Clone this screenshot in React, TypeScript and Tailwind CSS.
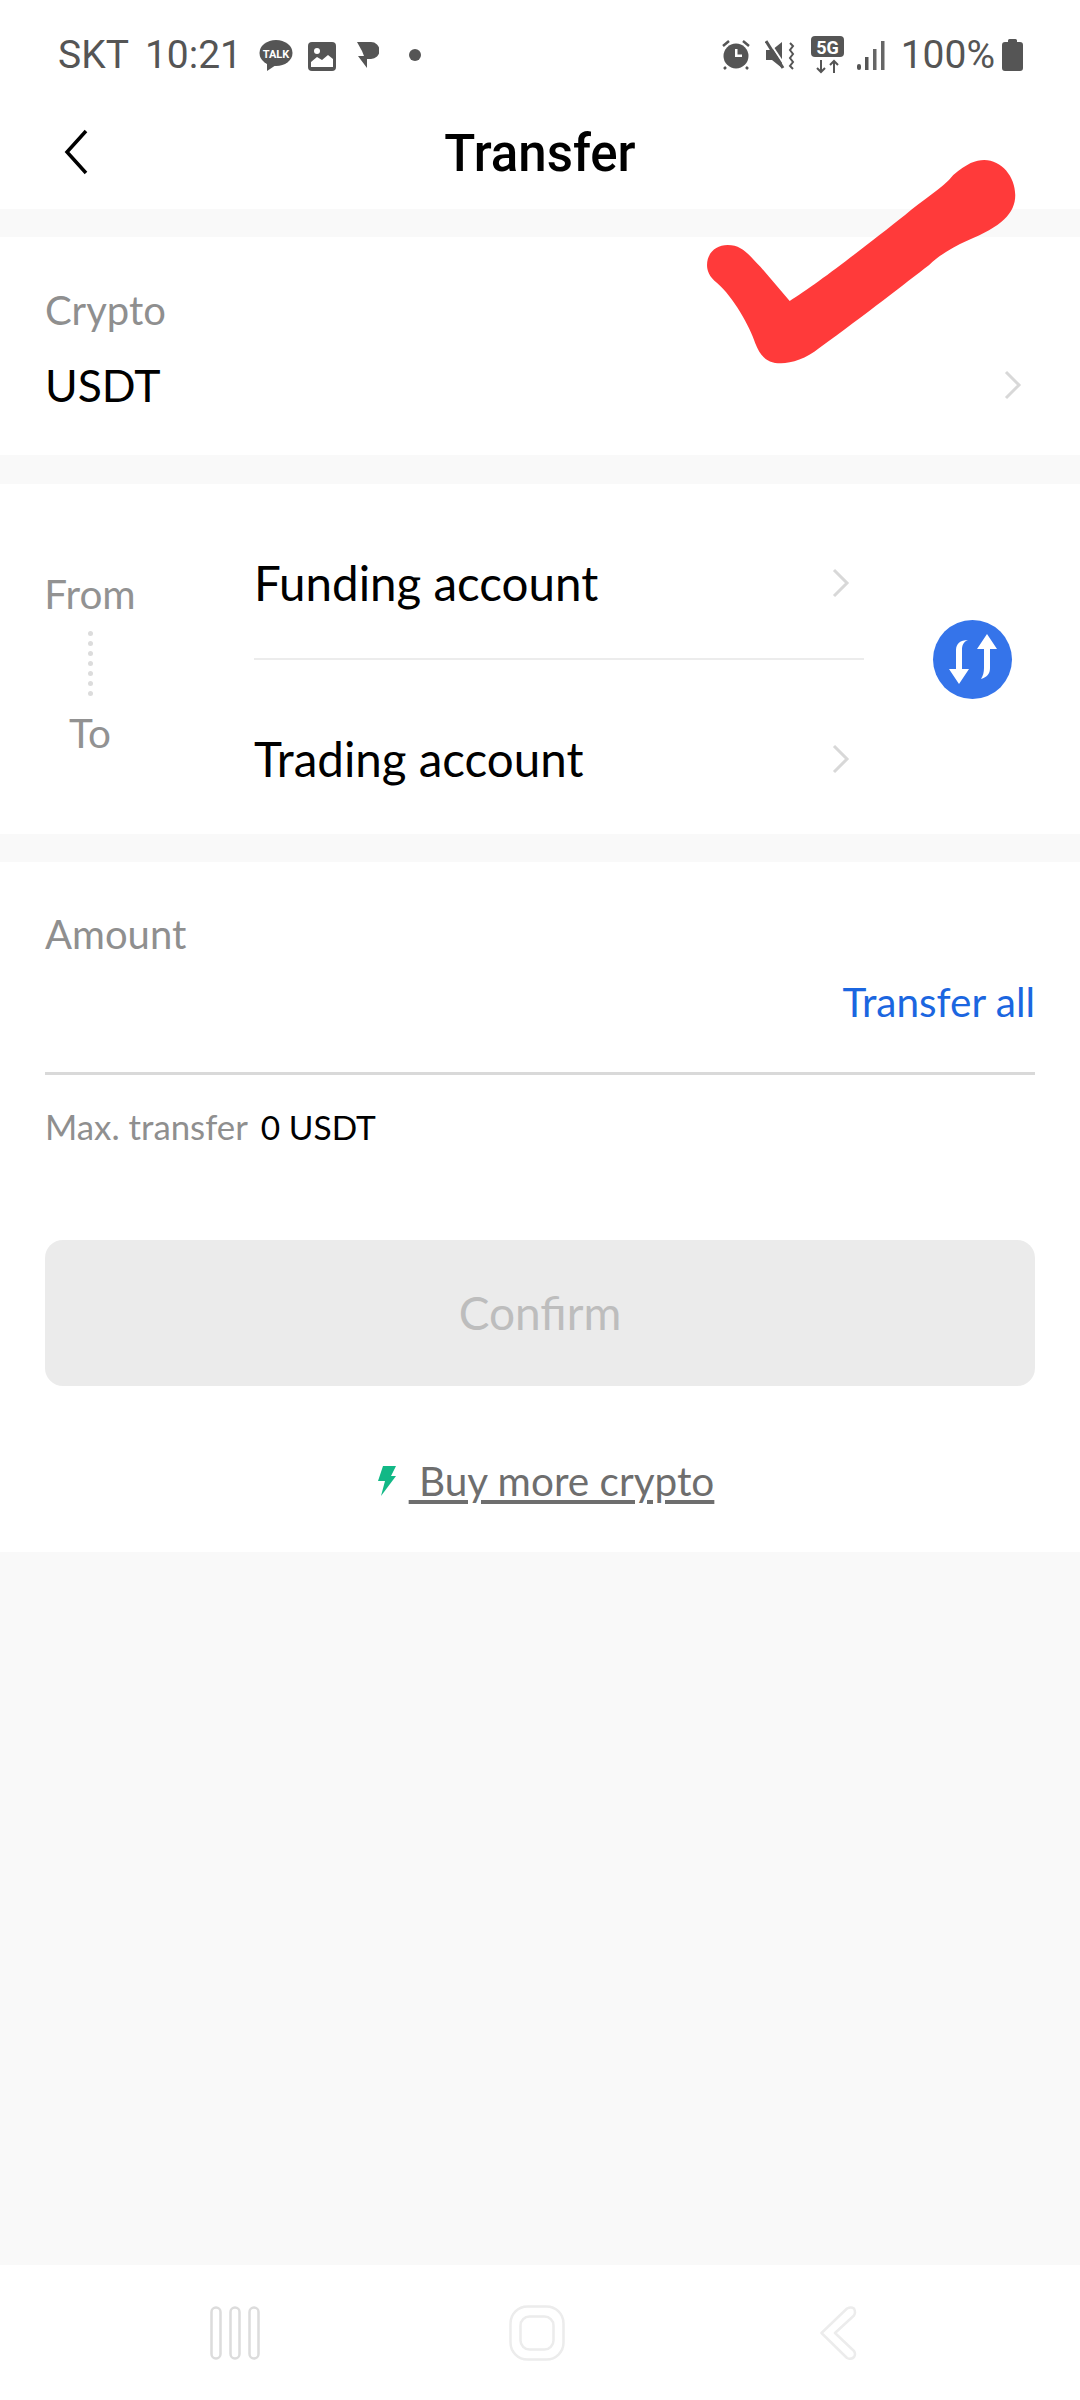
const roboto = "font-['Roboto',sans-serif]";

function Chevron() {
  return (
    <svg width="18" height="30" viewBox="0 0 18 30" fill="none" stroke="#d8d8d8" strokeWidth="3" className="shrink-0">
      <path d="M2 2l13 13L2 28" />
    </svg>
  );
}

function StatusLeft() {
  return (
    <div className="flex items-center">
      <span className="text-[39px] leading-none text-[#555] ml-[58px]">SKT</span>
      <span className="text-[39px] leading-none text-[#555] ml-[16px]">10:21</span>
      {/* kakao talk */}
      <svg width="34" height="32" viewBox="0 0 34 32" className="ml-[17px] mt-[2px]">
        <ellipse cx="17" cy="13" rx="16.500" ry="13" fill="#555" />
        <path d="M8 22l0 9 9-6z" fill="#555" />
        <text x="17" y="17.500" textAnchor="middle" fontSize="11" fontWeight="700" fill="#fff" fontFamily="Roboto">TALK</text>
      </svg>
      {/* picture */}
      <svg width="28" height="29" viewBox="0 0 28 29" className="ml-[15px] mt-[2px]">
        <rect x="0" y="0" width="28" height="29" rx="4" fill="#555" />
        <circle cx="9" cy="9" r="3" fill="#fff" />
        <path d="M3 25v-5l6-5 5 3 6-5 5 4v8z" fill="#fff" />
      </svg>
      {/* flash p */}
      <svg width="22" height="26" viewBox="0 0 22 26" className="ml-[21px]">
        <path d="M0 0h14a8.500 8.500 0 0 1 0 17h-4v9L1 14h6l-2-5z" fill="#555" />
      </svg>
      <span className="ml-[30px] w-[12px] h-[12px] rounded-full bg-[#555]" />
    </div>
  );
}

function StatusRight() {
  return (
    <div className="flex items-center">
      {/* alarm */}
      <svg width="30" height="30" viewBox="0 0 30 30">
        <circle cx="15" cy="16" r="12.500" fill="#555" />
        <path d="M14 9v8h7v-2.500h-4.500V9z" fill="#fff" />
        <path d="M2 6l6-5M28 6l-6-5M5 27l-2 2M25 27l2 2" stroke="#555" strokeWidth="2.500" />
      </svg>
      {/* mute vibrate */}
      <svg width="30" height="30" viewBox="0 0 30 30" className="ml-[14px]">
        <path d="M1 10h6l10-8v26L7 20H1z" fill="#555" />
        <path d="M3 0l20 30" stroke="#fff" strokeWidth="2" />
        <path d="M1 1l17 27" stroke="#555" strokeWidth="3" />
        <path d="M25 3l3 3-3 4 3 4-3 4 3 4-3 4 3 3" stroke="#555" strokeWidth="2" fill="none" />
      </svg>
      {/* 5G */}
      <svg width="33" height="38" viewBox="0 0 33 38" className="ml-[16px] mb-[1px]">
        <rect width="33" height="21" rx="4" fill="#555" />
        <text x="16.500" y="17.500" textAnchor="middle" fontSize="18" fontWeight="700" fill="#fff" fontFamily="Roboto">5G</text>
        <path d="M10 24v12M6 32l4 4 4-4M23 37V25M19 29l4-4 4 4" stroke="#555" strokeWidth="2" fill="none" />
      </svg>
      {/* signal */}
      <svg width="28" height="30" viewBox="0 0 28 30" className="ml-[13px]">
        <rect x="0" y="24" width="4" height="6" rx="2" fill="#555" />
        <rect x="8" y="17" width="3.500" height="13" fill="#555" />
        <rect x="16" y="9" width="3.500" height="21" fill="#666" />
        <rect x="24" y="1" width="3.500" height="29" fill="#666" />
      </svg>
      <span className="text-[39px] leading-none text-[#555] ml-[16px]">100%</span>
      {/* battery */}
      <svg width="21" height="32" viewBox="0 0 21 32" className="ml-[7px] mr-[57px]">
        <path d="M6 3V1.500A1.500 1.500 0 0 1 7.500 0h6A1.500 1.500 0 0 1 15 1.500V3h3a3 3 0 0 1 3 3v23a3 3 0 0 1-3 3H3a3 3 0 0 1-3-3V6a3 3 0 0 1 3-3z" fill="#555" />
      </svg>
    </div>
  );
}

function NavBar() {
  return (
    <div className="h-[135px] bg-white flex items-center">
      <svg width="50" height="54" viewBox="0 0 50 54" fill="none" stroke="#dcdcdc" strokeWidth="2.500" className="ml-[210px]">
        <rect x="1.500" y="1.500" width="9" height="51" rx="4.500" />
        <rect x="20.500" y="1.500" width="9" height="51" rx="4.500" />
        <rect x="39.500" y="1.500" width="9" height="51" rx="4.500" />
      </svg>
      <svg width="56" height="56" viewBox="0 0 56 56" fill="none" stroke="#ececec" strokeWidth="2.500" className="ml-[249px]">
        <rect x="1.500" y="1.500" width="53" height="53" rx="17" />
        <rect x="11.500" y="11.500" width="33" height="33" rx="9" />
      </svg>
      <svg width="37" height="54" viewBox="0 0 37 54" fill="none" stroke="#ececec" strokeWidth="2.500" className="ml-[255px]">
        <path d="M1.500 27L27 2.500q4-2 7 0 2 4 0 7L15 27l19 18q2 3 0 6-3 3-7 1z" strokeLinejoin="round" />
      </svg>
    </div>
  );
}

function AccountRow({ label }: { label: string }) {
  return (
    <div className="flex-1 flex items-center justify-between pt-[24px] pr-[14px]">
      <span className="text-[47.500px] leading-none text-black">{label}</span>
      <Chevron />
    </div>
  );
}

export default function App() {
  return (
    <div className="relative w-[1080px] h-[2400px] flex flex-col bg-[#f9f9f9] overflow-hidden font-['Lato',sans-serif]">
      {/* status bar + header */}
      <div className="bg-white h-[209px] flex flex-col shrink-0">
        <div className={`h-[110px] flex items-center justify-between ${roboto}`}>
          <StatusLeft />
          <StatusRight />
        </div>
        <div className="relative flex-1 flex items-start justify-center">
          <svg width="24" height="46" viewBox="0 0 24 46" fill="none" stroke="#000" strokeWidth="3.500" className="absolute left-[64px] top-[19px]">
            <path d="M22 2L3 23l19 21" />
          </svg>
          <h1 className={`text-[51px] leading-[56px] font-medium text-black mt-[16px] ${roboto}`}>Transfer</h1>
        </div>
      </div>

      {/* crypto */}
      <div className="mt-[28px] h-[218px] bg-white pl-[45px] pr-[58px] pt-[49px] shrink-0">
        <div className="text-[40px] leading-[48px] text-[#8f8f8f]">Crypto</div>
        <div className="flex items-center justify-between mt-[27px]">
          <span className="text-[44.500px] leading-[48px] text-black">USDT</span>
          <Chevron />
        </div>
      </div>

      {/* from / to */}
      <div className="mt-[29px] h-[350px] bg-white flex items-stretch shrink-0">
        <div className="w-[90px] ml-[45px] mr-[119px] flex flex-col items-center justify-center pt-[8px]">
          <span className="text-[40.500px] leading-[46px] text-[#929292]">From</span>
          <div className="my-[14px] flex flex-col gap-[5px]">
            {[0, 1, 2, 3, 4, 5, 6].map((i) => (
              <span key={i} className="block w-[5px] h-[5px] rounded-full bg-[#dcdcdc]" />
            ))}
          </div>
          <span className="text-[40.500px] leading-[46px] text-[#929292]">To</span>
        </div>
        <div className="w-[610px] flex flex-col">
          <AccountRow label="Funding account" />
          <div className="h-[2px] bg-[#ececec]" />
          <AccountRow label="Trading account" />
        </div>
        <div className="ml-[69px] self-center w-[79px] h-[79px] rounded-full bg-[#3574ea] flex items-center justify-center">
          <svg width="48" height="50" viewBox="0 0 48 50" fill="#fff">
            <path d="M19 6C14 8 13 12 13 16V35H20L10 50L0 35H7V16C7 10 11 6 19 6Z" />
            <path d="M28 15L38 0L48 15H41V34C41 40 38 43 32 45C34 42 35 38 35 34V15Z" />
          </svg>
        </div>
      </div>

      {/* amount */}
      <div className="mt-[28px] h-[690px] bg-white px-[45px] pt-[47px] shrink-0 flex flex-col">
        <div className="text-[40px] leading-[50px] text-[#8f8f8f]">Amount</div>
        <div className="flex justify-end h-[48px] mt-[19px] text-[40.500px] leading-[48px] text-[#1b66e0]">Transfer all</div>
        <div className="h-[3px] bg-[#d9d9d9] mt-[46px]" />
        <div className="flex items-center mt-[32px] leading-[40px]">
          <span className="text-[#8f8f8f] text-[34.800px]">Max. transfer</span>
          <span className="text-black text-[33.500px] ml-[13px]">0 USDT</span>
        </div>
        <div className="h-[146px] mt-[93px] rounded-[18px] bg-[#ebebeb] flex items-center justify-center pb-[2px] text-[46px] text-[#bdbdbd]">Confirm</div>
        <div className="flex items-center justify-center pl-[12px] mt-[72px] text-[40.500px] leading-[46px] text-[#6e6e6e]">
          <svg width="18" height="30" viewBox="0 0 18 30" fill="#12b886" className="mr-[13px]">
            <path d="M5 0h13l-5 10h5L3 30l4-15H0z" />
          </svg>
          <span className="underline underline-offset-[4px] whitespace-pre"> Buy more crypto</span>
        </div>
      </div>

      <div className="flex-1" />
      <NavBar />

      {/* red hand-drawn tick over the screen */}
      <svg width="540" height="400" viewBox="0 0 1568 1200" preserveAspectRatio="none" className="absolute left-[540px] top-0 pointer-events-none">
        <path
          d="M545 735C590 735 610 770 640 800L725 903C800 855 950 735 1060 645C1110 600 1170 565 1200 525C1240 490 1265 480 1290 480C1340 480 1380 530 1380 585C1380 640 1340 680 1240 722C1200 740 1160 765 1130 795C1060 850 950 940 810 1045C775 1075 730 1090 700 1090C660 1090 640 1070 625 1030C610 980 560 890 515 850C490 830 485 810 485 795C485 760 510 735 545 735Z"
          fill="#ff3a3a"
        />
      </svg>
    </div>
  );
}
